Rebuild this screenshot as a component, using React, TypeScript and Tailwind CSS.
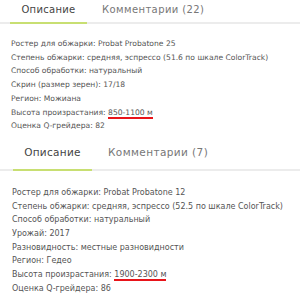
const first = {
  count: 22,
  rows: [
    "Ростер для обжарки: Probat Probatone 25",
    "Степень обжарки: средняя, эспрессо (51.6 по шкале ColorTrack)",
    "Способ обработки: натуральный",
    "Скрин (размер зерен): 17/18",
    "Регион: Можиана",
  ],
  height: "850-1100 м",
  grade: "82",
};

const second = {
  count: 7,
  rows: [
    "Ростер для обжарки: Probat Probatone 12",
    "Степень обжарки: средняя, эспрессо (52.5 по шкале ColorTrack)",
    "Способ обработки: натуральный",
    "Урожай: 2017",
    "Разновидность: местные разновидности",
    "Регион: Гедео",
  ],
  height: "1900-2300 м",
  grade: "86",
};

function Block({ data, big }: { data: typeof first; big?: boolean }) {
  return (
    <div className={big ? "text-[8px] px-[12px]" : "text-[7.6px] px-[11px]"}>
      <div className={big ? "flex border-b-2 border-[#ececec] h-[32px] items-end -mx-[12px] pl-[13px]" : "flex border-b-2 border-[#ececec] h-[24px] items-end -mx-[11px] pl-[10px]"}>
        <div className={big ? "w-[79px] -mb-[2px] border-b-2 border-[#c8df72] text-center pb-[8px] text-[10.5px] text-[#444] tracking-[0.3px]" : "w-[77px] -mb-[2px] border-b-2 border-[#c8df72] text-center pb-[5px] text-[10px] text-[#444] tracking-[0.3px]"}>
          Описание
        </div>
        <div className={big ? "ml-[16px] pb-[8px] text-[10.5px] text-[#777] tracking-[0.4px]" : "ml-[15px] pb-[5px] text-[10px] text-[#777] tracking-[0.4px]"}>
          Комментарии ({data.count})
        </div>
      </div>
      <div className={big ? "pt-[15px] leading-[13.7px] text-[#555]" : "pt-[13px] leading-[13.7px] text-[#555]"}>
        {data.rows.map((r) => (
          <div key={r}>{r}</div>
        ))}
        <div>
          Высота произрастания:{" "}
          <span className="border-b-2 border-[#e8141a]">{data.height}</span>
        </div>
        <div>Оценка Q-грейдера: {data.grade}</div>
      </div>
    </div>
  );
}

export default function App() {
  return (
    <div className="w-[300px] h-[300px] overflow-hidden bg-white font-['DejaVu_Sans',sans-serif]">
      <Block data={first} />
      <div className="h-[6px]" />
      <Block data={second} big />
    </div>
  );
}
